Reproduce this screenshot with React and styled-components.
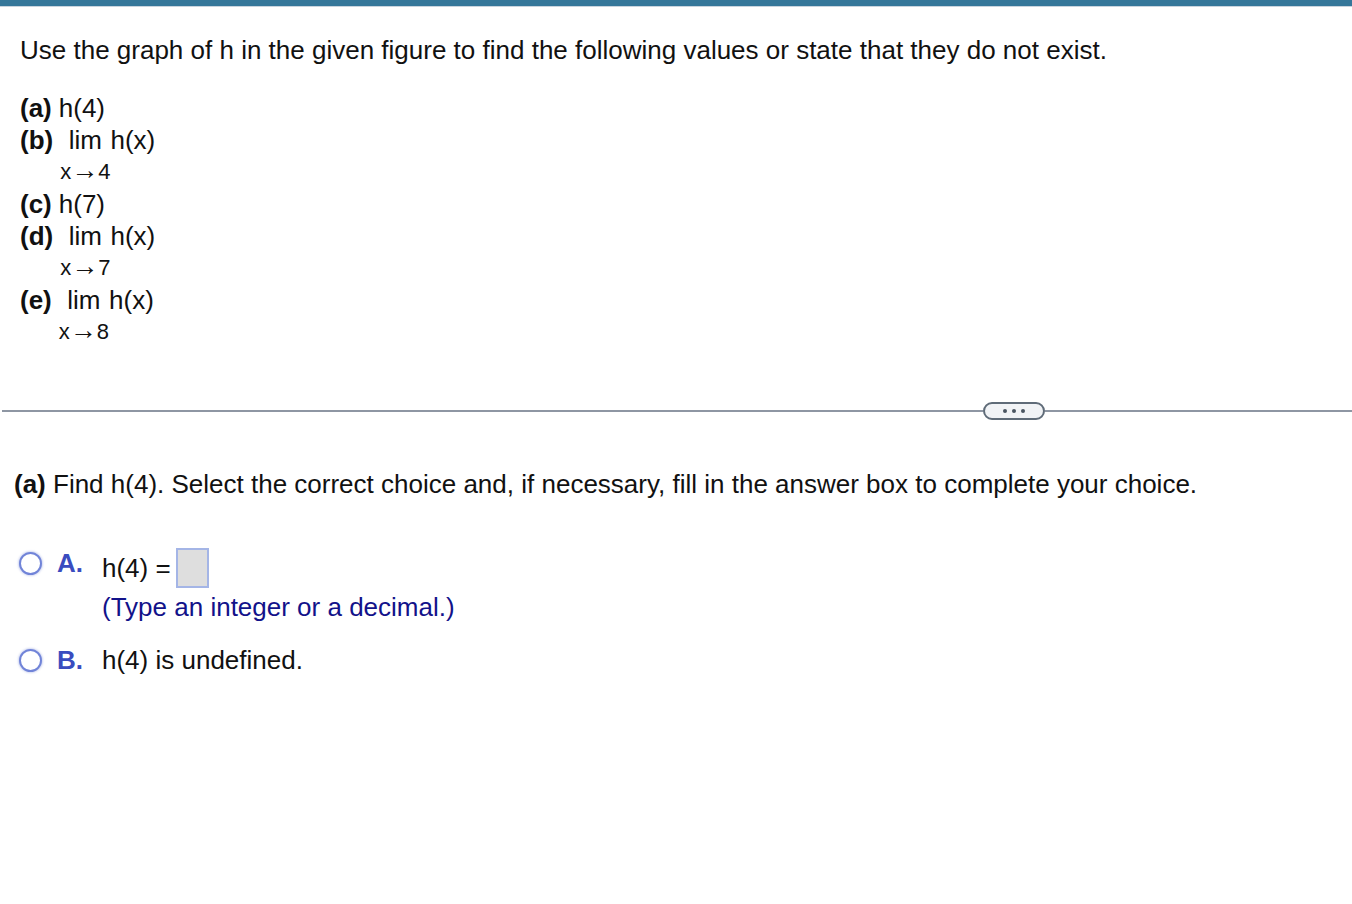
import React from 'react';
import styled, { createGlobalStyle } from 'styled-components';

const GlobalStyle = createGlobalStyle`
  html, body {
    margin: 0;
    padding: 0;
    background: #ffffff;
  }
  body {
    font-family: "Liberation Sans", Arial, Helvetica, sans-serif;
    color: #111111;
  }
`;

const TopBar = styled.div`
  height: 6px;
  background: #35779a;
  border-bottom: 1px solid #c9d4de;
`;

const Question = styled.section`
  padding: 28px 20px 0 20px;
  font-size: 26px;
`;

const Intro = styled.p`
  margin: 0 0 27px 0;
  line-height: 30px;
`;

const PartList = styled.div`
  display: flex;
  flex-direction: column;
`;

const PartRow = styled.div`
  display: flex;
  align-items: flex-start;
  line-height: 32px;
  gap: 7px;
`;

const PartLabel = styled.b`
  font-weight: bold;
`;

const LimGroup = styled.span`
  display: inline-flex;
  align-items: flex-start;
`;

const LimStack = styled.span`
  display: inline-flex;
  flex-direction: column;
  align-items: center;
`;

const LimSub = styled.span`
  font-size: 22px;
  line-height: 32px;
`;

const Arrow = styled.span`
  font-size: 27px;
  line-height: 0;
`;

const Divider = styled.div`
  display: flex;
  align-items: center;
  margin: 54px 0 0 2px;
`;

const Rule = styled.div`
  height: 2px;
  background: #8e96a3;
  flex: ${p => (p.$grow ? 1 : 'none')};
  width: ${p => (p.$grow ? 'auto' : '307px')};
`;

const MoreButton = styled.div`
  width: 58px;
  height: 14px;
  border: 2px solid #5f6b78;
  border-radius: 9px;
  background: #f1f3f6;
  display: flex;
  align-items: center;
  justify-content: center;
  gap: 5px;
`;

const Dot = styled.span`
  width: 4px;
  height: 4px;
  border-radius: 50%;
  background: #4a5561;
`;

const Answer = styled.section`
  padding: 49px 14px 0 14px;
  font-size: 26px;
`;

const Prompt = styled.p`
  margin: 0 0 49px 0;
  line-height: 30px;
`;

const Choice = styled.div`
  display: grid;
  grid-template-columns: 38px 45px 1fr;
  align-items: start;
  padding-left: 5px;
  margin-bottom: ${p => p.$mb || '0'};
`;

const Radio = styled.span`
  width: 23px;
  height: 23px;
  box-sizing: border-box;
  border-radius: 50%;
  border: 2px solid #7184d8;
  box-shadow: 0 0 2px 1px rgba(150, 165, 225, 0.45);
  background: #ffffff;
  margin-top: 4px;
`;

const ChoiceLetter = styled.span`
  color: #3a4cbf;
  font-weight: bold;
  line-height: 30px;
`;

const ChoiceBody = styled.div`
  display: flex;
  flex-direction: column;
`;

const EqLine = styled.div`
  display: flex;
  align-items: center;
  gap: 5px;
  line-height: 30px;
`;

const AnswerBox = styled.span`
  display: inline-block;
  width: 29px;
  height: 36px;
  border: 2px solid #a4b5e6;
  background: #dedede;
`;

const Hint = styled.div`
  color: #12128a;
  line-height: 30px;
  margin-top: 4px;
`;

const BodyText = styled.span`
  line-height: 30px;
`;

const Lim = ({ to, children }) => (
  <LimGroup>
    <LimStack>
      <span>lim</span>
      <LimSub>
        x<Arrow>→</Arrow>{to}
      </LimSub>
    </LimStack>
    <span>{children}</span>
  </LimGroup>
);

export default function App() {
  return (
    <>
      <GlobalStyle />
      <TopBar />
      <Question>
        <Intro>
          Use the graph of h in the given figure to find the following values or state that they do not exist.
        </Intro>
        <PartList>
          <PartRow>
            <PartLabel>(a)</PartLabel>
            <span>h(4)</span>
          </PartRow>
          <PartRow>
            <PartLabel>(b)</PartLabel>
            <Lim to="4">h(x)</Lim>
          </PartRow>
          <PartRow>
            <PartLabel>(c)</PartLabel>
            <span>h(7)</span>
          </PartRow>
          <PartRow>
            <PartLabel>(d)</PartLabel>
            <Lim to="7">h(x)</Lim>
          </PartRow>
          <PartRow>
            <PartLabel>(e)</PartLabel>
            <Lim to="8">h(x)</Lim>
          </PartRow>
        </PartList>
      </Question>

      <Divider>
        <Rule $grow />
        <MoreButton>
          <Dot />
          <Dot />
          <Dot />
        </MoreButton>
        <Rule />
      </Divider>

      <Answer>
        <Prompt>
          <b>(a)</b> Find h(4). Select the correct choice and, if necessary, fill in the answer box to complete your choice.
        </Prompt>

        <Choice $mb="23px">
          <Radio />
          <ChoiceLetter>A.</ChoiceLetter>
          <ChoiceBody>
            <EqLine>
              <span>h(4) =</span>
              <AnswerBox />
            </EqLine>
            <Hint>(Type an integer or a decimal.)</Hint>
          </ChoiceBody>
        </Choice>

        <Choice>
          <Radio />
          <ChoiceLetter>B.</ChoiceLetter>
          <BodyText>h(4) is undefined.</BodyText>
        </Choice>
      </Answer>
    </>
  );
}
